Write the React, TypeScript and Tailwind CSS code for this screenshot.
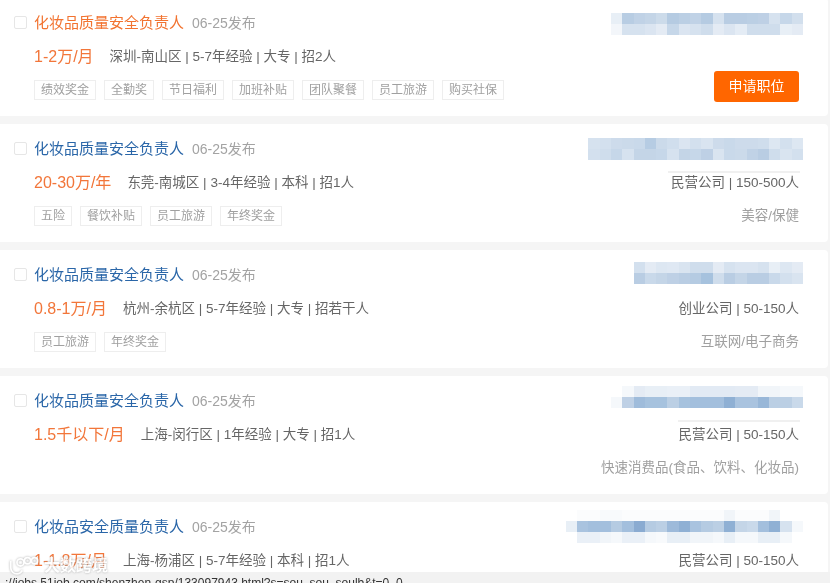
import React from 'react';

interface Job {
  title: string;
  salary: string;
  info: string;
  tags: string[];
  company?: string;
  industry?: string;
  mosaic: string[][];
  mosaicTop: string;
  smudge?: string;
  active?: boolean;
}

const jobs: Job[] = [
  {
    title: '化妆品质量安全负责人',
    salary: '1-2万/月',
    info: '深圳-南山区 | 5-7年经验 | 大专 | 招2人',
    tags: ['绩效奖金', '全勤奖', '节日福利', '加班补贴', '团队聚餐', '员工旅游', '购买社保'],
    active: true,
    mosaicTop: 'mt-[15px]',
    mosaic: [
      ['#e8eff6', '#b8cde3', '#c0d2e6', '#c4d5e7', '#ccdbea', '#b5cbe2', '#bbcfe4', '#c0d2e6', '#b5cbe2', '#d6e2ef', '#b9cde3', '#b9cde3', '#bbcfe4', '#bed0e5', '#d6e2ef', '#c6d7e9', '#d2dfed'],
      ['#f3f6fa', '#d6e2ef', '#d6e2ef', '#dbe5f1', '#e4ebf4', '#c6d7e9', '#dbe5f1', '#d6e2ef', '#cfddec', '#e4ebf4', '#dbe5f1', '#e4ecf5', '#cfddec', '#cfddec', '#cfddec', '#e8eff6', '#e4ebf4'],
    ],
  },
  {
    title: '化妆品质量安全负责人',
    salary: '20-30万/年',
    info: '东莞-南城区 | 3-4年经验 | 本科 | 招1人',
    tags: ['五险', '餐饮补贴', '员工旅游', '年终奖金'],
    company: '民营公司 | 150-500人',
    industry: '美容/保健',
    smudge: 'top-[47px] w-[132px]',
    mosaicTop: 'mt-[14px]',
    mosaic: [
      ['#d6e2ef', '#d3e0ee', '#cddbeb', '#cbdaea', '#c9d9ea', '#b6cce3', '#cbdaea', '#d0deed', '#dbe5f1', '#d3e0ee', '#d9e4f0', '#cddbeb', '#c9d9ea', '#cddbeb', '#cddbeb', '#cfddec', '#dde7f2', '#d3e0ee', '#dde7f2'],
      ['#d3e0ee', '#cfddec', '#c6d7e9', '#d6e2ef', '#c4d5e7', '#c4d5e7', '#c6d7e9', '#d6e2ef', '#c4d5e7', '#c6d7e9', '#bed0e5', '#d9e4f0', '#c9d9ea', '#cbdaea', '#c0d2e6', '#b9cde3', '#cfddec', '#d9e4f0', '#d3e0ee'],
    ],
  },
  {
    title: '化妆品质量安全负责人',
    salary: '0.8-1万/月',
    info: '杭州-余杭区 | 5-7年经验 | 大专 | 招若干人',
    tags: ['员工旅游', '年终奖金'],
    company: '创业公司 | 50-150人',
    industry: '互联网/电子商务',
    mosaicTop: 'mt-[12px]',
    mosaic: [
      ['#d3e0ee', '#e4ebf4', '#dde7f2', '#dfe8f3', '#d9e4f0', '#cfddec', '#cfddec', '#e4ebf4', '#d6e2ef', '#dbe5f1', '#dbe5f1', '#d6e2ef', '#e8eff6', '#dde7f2', '#e4ebf4'],
      ['#b9cde3', '#c9d9ea', '#c4d5e7', '#bed0e5', '#b9cde3', '#b5cbe2', '#a6c2de', '#cfddec', '#b9cde3', '#c4d5e7', '#b9cde3', '#b9cde3', '#c9d9ea', '#d3e0ee', '#d9e4f0'],
    ],
  },
  {
    title: '化妆品质量安全负责人',
    salary: '1.5千以下/月',
    info: '上海-闵行区 | 1年经验 | 大专 | 招1人',
    tags: [],
    company: '民营公司 | 50-150人',
    industry: '快速消费品(食品、饮料、化妆品)',
    smudge: 'top-[44px] w-[122px]',
    mosaicTop: 'mt-[10px]',
    mosaic: [
      ['#ffffff', '#f5f8fb', '#e4ebf4', '#e8eff6', '#e8eff6', '#eaf0f7', '#eaf0f7', '#e2eaf4', '#e2eaf4', '#e2eaf4', '#e2eaf4', '#e4ebf4', '#e4ebf4', '#f1f5f9', '#f1f5f9', '#f5f8fb', '#f5f8fb'],
      ['#f5f8fb', '#bed0e5', '#9fbcdb', '#a6c2de', '#a6c2de', '#bbcfe4', '#a6c2de', '#a3bfdd', '#a3bfdd', '#a3bfdd', '#8fb0d4', '#a9c3df', '#a9c3df', '#98b7d8', '#bbcfe4', '#bbcfe4', '#c9d9ea'],
    ],
  },
  {
    title: '化妆品安全质量负责人',
    salary: '1-1.8万/月',
    info: '上海-杨浦区 | 5-7年经验 | 本科 | 招1人',
    tags: [],
    company: '民营公司 | 50-150人',
    mosaicTop: 'mt-[8px]',
    mosaic: [
      ['#ffffff', '#fbfcfd', '#fbfcfd', '#f8fafc', '#f8fafc', '#fbfcfd', '#fbfcfd', '#fbfcfd', '#fbfcfd', '#fbfcfd', '#fbfcfd', '#fbfcfd', '#fbfcfd', '#fbfcfd', '#f1f5f9', '#fbfcfd', '#fbfcfd', '#fbfcfd', '#f1f5f9', '#ffffff', '#ffffff'],
      ['#e8eff6', '#a9c3df', '#a3bfdd', '#a3bfdd', '#b5cbe2', '#a3bfdd', '#8aabd1', '#b5cbe2', '#bbcfe4', '#9dbada', '#8fb0d4', '#a9c3df', '#b5cbe2', '#bbcfe4', '#8fb0d4', '#c4d5e7', '#c9d9ea', '#a3bfdd', '#8fb0d4', '#d6e2ef', '#f5f8fb'],
      ['#ffffff', '#eaf0f7', '#eaf0f7', '#f1f5f9', '#f5f8fb', '#eaf0f7', '#eaf0f7', '#f5f8fb', '#f8fafc', '#e8eff6', '#e8eff6', '#f1f5f9', '#f1f5f9', '#f5f8fb', '#e8eff6', '#f5f8fb', '#f5f8fb', '#e8eff6', '#e8eff6', '#f5f8fb', '#ffffff'],
    ],
  },
];

const Mosaic: React.FC<{ rows: string[][]; top: string }> = ({ rows, top }) => (
  <div className={`${top} -mr-1 flex flex-col`}>
    {rows.map((row, i) => (
      <div key={i} className="flex justify-end">
        {row.map((color, j) => (
          <div key={j} className="h-[11px] w-[11.3px]" style={{ backgroundColor: color }} />
        ))}
      </div>
    ))}
  </div>
);

const JobCard: React.FC<{ job: Job }> = ({ job }) => (
  <div className="flex h-[118px] w-[828px] shrink-0 justify-between rounded-r-[4px] bg-white">
    <div className="flex pl-[14px]">
      <div className="mt-[18px] mr-[7px] h-[13px] w-[13px] rounded-[2px] border border-[#e6e6e6]" />
      <div className="flex flex-col pt-[14px]">
        <div className="flex h-[22px] items-center">
          <span className={`text-[15px] ${job.active ? 'text-[#f27330]' : 'text-[#2a66a8]'}`}>{job.title}</span>
          <span className="ml-2 text-[14px] text-[#a3a3a3]">06-25发布</span>
        </div>
        <div className="mt-3 flex h-[22px] items-center">
          <span className="text-[16px] text-[#f2763a]">{job.salary}</span>
          <span className="ml-4 text-[13.5px] text-[#666666]">{job.info}</span>
        </div>
        {job.tags.length > 0 && (
          <div className="mt-3 flex gap-2">
            {job.tags.map((tag) => (
              <span
                key={tag}
                className="flex h-5 items-center border border-[#eeeeee] px-[6px] text-[12px] text-[#a0a0a0]"
              >
                {tag}
              </span>
            ))}
          </div>
        )}
      </div>
    </div>

    <div className="relative flex w-[280px] flex-col items-end pr-[29px]">
      <Mosaic rows={job.mosaic} top={job.mosaicTop} />
      {job.smudge && <div className={`absolute right-[28px] h-[2px] ${job.smudge} bg-[#f0f0f0]`} />}
      {job.company && (
        <div className="absolute top-[48px] right-[29px] flex h-[22px] items-center text-[13.5px] text-[#666666]">
          {job.company}
        </div>
      )}
      {job.industry && (
        <div className="absolute top-[81px] right-[29px] flex h-[22px] items-center text-[13.5px] text-[#a0a0a0]">
          {job.industry}
        </div>
      )}
      {job.active && (
        <button className="absolute top-[73px] right-[29px] flex h-[31px] w-[85px] items-center justify-center rounded-[3px] bg-[#ff6600] text-[14px] text-[#ffffff]">
          申请职位
        </button>
      )}
    </div>
  </div>
);

const Watermark: React.FC = () => (
  <div className="absolute bottom-[5px] left-[9px] flex items-center text-[#ffffff] opacity-80 drop-shadow-[0_0_1px_#999999]">
    <svg width="30" height="20" viewBox="0 0 34 22" fill="none" stroke="currentColor" strokeWidth="2">
      <path d="M2 5v8a7 7 0 0 0 7 7c3 0 5-2 6-4" />
      <circle cx="13" cy="7" r="4" />
      <circle cx="21" cy="5" r="3.5" />
      <circle cx="29" cy="5" r="3.5" />
    </svg>
    <span className="ml-[5px] text-[16px] font-bold">大数跨境</span>
  </div>
);

export default function App() {
  return (
    <div
      className="relative flex h-[583px] w-[830px] flex-col overflow-hidden bg-[#f5f5f5] blur-[0.4px]"
      style={{ fontFamily: '"Liberation Sans", "Noto Sans CJK SC", sans-serif' }}
    >
      <div className="-mt-[2px] flex min-h-0 flex-1 flex-col gap-2 overflow-hidden">
        {jobs.map((job, i) => (
          <JobCard key={i} job={job} />
        ))}
      </div>
      <div className="h-[11px] shrink-0 overflow-hidden whitespace-nowrap bg-[#f2f2f2] pl-[5px] text-[12px] leading-[22px] text-[#333333]">
        ://jobs.51job.com/shenzhen-gsp/133097943.html?s=sou_sou_soulb&amp;t=0_0
      </div>
      <Watermark />
    </div>
  );
}
